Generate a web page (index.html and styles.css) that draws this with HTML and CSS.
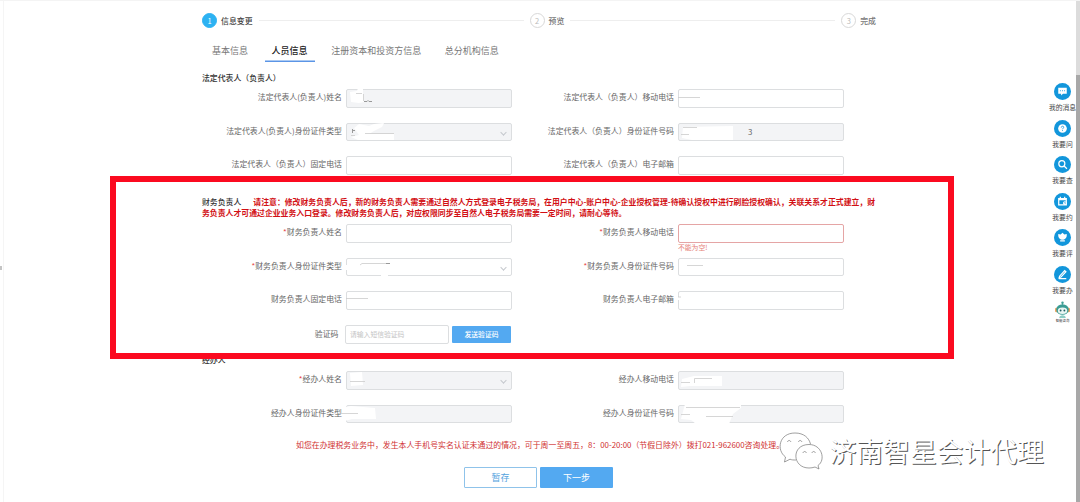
FILE: index.html
```html
<!doctype html>
<html lang="zh-CN">
<head>
  <meta charset="utf-8">
  <title>信息变更</title>
  <link rel="stylesheet" href="styles.css">
</head>
<body>
  <div class="page">
    <div class="drawer"><span class="drawer__handle"></span></div>

    <main class="main">
      <div class="steps">
        <span class="steps__num steps__num--active">1</span>
        <span class="steps__text steps__text--active">信息变更</span>
        <span class="steps__line"></span>
        <span class="steps__num">2</span>
        <span class="steps__text">预览</span>
        <span class="steps__line"></span>
        <span class="steps__num">3</span>
        <span class="steps__text">完成</span>
      </div>

      <nav class="tabs">
        <a class="tabs__item">基本信息</a>
        <a class="tabs__item tabs__item--active">人员信息</a>
        <a class="tabs__item">注册资本和投资方信息</a>
        <a class="tabs__item">总分机构信息</a>
      </nav>

      <!-- 法定代表人 -->
      <section class="section section--legal">
        <h3 class="section__title">法定代表人（负责人）</h3>
        <div class="form">
          <div class="field">
            <label class="field__label">法定代表人(负责人)姓名</label>
            <div class="field__input field__input--disabled">
              <svg class="mask" viewBox="0 0 166 19">
                <path class="mask__fill" d="M4 3l7-1 1-3h5v4l1 10-5 1-8-1z"/>
                <path class="mask__line" d="M10 4.500h6M17.500 5v7"/>
                <path class="mask__ink" d="M18 12.500h3l1-1 1 1h3"/>
              </svg>
            </div>
          </div>
          <div class="field">
            <label class="field__label">法定代表人（负责人）移动电话</label>
            <div class="field__input">
              <svg class="mask" viewBox="0 0 166 19"><path class="mask__line" d="M0 8.500h22"/></svg>
            </div>
          </div>
          <div class="field">
            <label class="field__label">法定代表人(负责人)身份证件类型</label>
            <div class="field__input field__input--disabled field__input--select">
              <svg class="mask" viewBox="0 0 166 19">
                <path class="mask__fill" d="M8 5l5-4 10 2 5-2 10-1-2 4-8 4-5 3h25v6H12l-7-3 8-2z"/>
                <path class="mask__line" d="M19 10.500h29M5 12.500h4"/>
                <path class="mask__ink" d="M6.500 6v4M6 7.500h3"/>
              </svg>
            </div>
          </div>
          <div class="field">
            <label class="field__label">法定代表人（负责人）身份证件号码</label>
            <div class="field__input field__input--disabled">
              <svg class="mask" viewBox="0 0 166 19">
                <path class="mask__fill" d="M5 4l50-1v14H14l-10-2z"/>
                <path class="mask__line" d="M5 4.500h14M3 11.500h8"/>
              </svg>
              <span class="field__rest">3</span>
            </div>
          </div>
          <div class="field">
            <label class="field__label">法定代表人（负责人）固定电话</label>
            <div class="field__input"></div>
          </div>
          <div class="field">
            <label class="field__label">法定代表人（负责人）电子邮箱</label>
            <div class="field__input"></div>
          </div>
        </div>
      </section>

      <!-- 财务负责人 -->
      <section class="section section--finance">
        <h3 class="section__title">财务负责人<span class="section__notice">请注意：修改财务负责人后，新的财务负责人需要通过自然人方式登录电子税务局，在用户中心-账户中心-企业授权管理-待确认授权中进行刷脸授权确认，关联关系才正式建立，财</span><br><span class="section__notice section__notice--next">务负责人才可通过企业业务入口登录。修改财务负责人后，对应权限同步至自然人电子税务局需要一定时间，请耐心等待。</span></h3>
        <div class="form">
          <div class="field">
            <label class="field__label"><i class="req">*</i>财务负责人姓名</label>
            <div class="field__input"></div>
          </div>
          <div class="field">
            <label class="field__label"><i class="req">*</i>财务负责人移动电话</label>
            <div class="field__input field__input--error">
              <span class="field__error">不能为空!</span>
            </div>
          </div>
          <div class="field">
            <label class="field__label"><i class="req">*</i>财务负责人身份证件类型</label>
            <div class="field__input field__input--select">
              <svg class="mask" viewBox="0 0 166 19">
                <path class="mask__fill" d="M-1 7h4v5h-4zM35 16h7v3h-7z"/>
                <path class="mask__line" d="M14 7l2-1.500h25"/>
                <path class="mask__ink" d="M40 5.500h4"/>
              </svg>
            </div>
          </div>
          <div class="field">
            <label class="field__label"><i class="req">*</i>财务负责人身份证件号码</label>
            <div class="field__input">
              <svg class="mask" viewBox="0 0 166 19"><path class="mask__line" d="M9 7.500h16"/></svg>
            </div>
          </div>
          <div class="field">
            <label class="field__label">财务负责人固定电话</label>
            <div class="field__input">
              <svg class="mask" viewBox="0 0 166 19"><path class="mask__line" d="M0 7.500h22"/></svg>
            </div>
          </div>
          <div class="field">
            <label class="field__label">财务负责人电子邮箱</label>
            <div class="field__input">
              <svg class="mask" viewBox="0 0 166 19">
                <path class="mask__fill" d="M-1 6h3v3h-3z"/>
                <path class="mask__line" d="M0 6h3"/>
              </svg>
            </div>
          </div>
          <div class="field field--code">
            <label class="field__label">验证码</label>
            <div class="field__input field__input--code">请输入短信验证码</div>
            <button class="btn btn--send">发送验证码</button>
          </div>
        </div>
      </section>

      <!-- 经办人 -->
      <section class="section section--agent">
        <h3 class="section__title">经办人</h3>
        <div class="form">
          <div class="field">
            <label class="field__label"><i class="req">*</i>经办人姓名</label>
            <div class="field__input field__input--disabled field__input--select">
              <svg class="mask" viewBox="0 0 166 19">
                <path class="mask__fill" d="M4 2l12-1 1 13-12 1z"/>
                <path class="mask__line" d="M4 10.500h15"/>
              </svg>
            </div>
          </div>
          <div class="field">
            <label class="field__label">经办人移动电话</label>
            <div class="field__input field__input--disabled">
              <svg class="mask" viewBox="0 0 166 19">
                <path class="mask__fill" d="M4 8l12-3h28v10H12l-9 1z"/>
                <path class="mask__line" d="M3 11.500h9M16.500 12V7.500H34"/>
              </svg>
            </div>
          </div>
          <div class="field">
            <label class="field__label">经办人身份证件类型</label>
            <div class="field__input field__input--disabled">
              <svg class="mask" viewBox="0 0 166 19">
                <path class="mask__fill" d="M-1 2l6-1 24 2 1 11H6l-7 2z"/>
                <path class="mask__line" d="M-5 8.500h17"/>
              </svg>
            </div>
          </div>
          <div class="field">
            <label class="field__label">经办人身份证件号码</label>
            <div class="field__input field__input--disabled">
              <svg class="mask" viewBox="0 0 166 19">
                <path class="mask__fill" d="M7-1h56v4l-8 6-4 10H18l-5-4-10-1z"/>
                <path class="mask__line" d="M8 2.500h54M3 9.500h9M28 11.500h27"/>
              </svg>
            </div>
          </div>
        </div>
      </section>

      <p class="tip">如您在办理税务业务中，发生本人手机号实名认证未通过的情况，可于周一至周五，8：00-20:00（节假日除外）拨打021-962600咨询处理。</p>

      <div class="actions">
        <button class="btn btn--plain">暂存</button>
        <button class="btn btn--primary">下一步</button>
      </div>
    </main>

    <aside class="side">
      <a class="side__item">
        <svg class="side__icon" viewBox="0 0 18 18"><circle cx="9" cy="9" r="9"/><path class="w" d="M4.500 5h9v6.500H9.500L7.500 13.300v-1.800h-3z"/><path class="d" d="M6.300 8.200h1M8.500 8.200h1M10.700 8.200h1"/></svg>
        <span class="side__text">我的消息</span>
      </a>
      <a class="side__item">
        <svg class="side__icon" viewBox="0 0 18 18"><circle cx="9" cy="9" r="9"/><circle class="w" cx="9" cy="9" r="4.600"/><path class="d" d="M7.700 8c0-1.900 2.700-1.800 2.600-.2 0 .8-1.300.9-1.300 2M9 10.800v.9"/></svg>
        <span class="side__text">我要问</span>
      </a>
      <a class="side__item">
        <svg class="side__icon" viewBox="0 0 18 18"><circle cx="9" cy="9" r="9"/><circle class="s" cx="8.300" cy="8.200" r="3.200"/><path class="s" d="M10.700 10.600l3 2.900"/></svg>
        <span class="side__text">我要查</span>
      </a>
      <a class="side__item">
        <svg class="side__icon" viewBox="0 0 18 18"><circle cx="9" cy="9" r="9"/><path class="s" d="M5 6h8v6.500H5zM5 7h8M6.700 4v2M11.300 4v2"/><circle class="w" cx="11.500" cy="10.700" r="2"/><path class="d" d="M11.500 9.800v1h.8"/></svg>
        <span class="side__text">我要约</span>
      </a>
      <a class="side__item">
        <svg class="side__icon" viewBox="0 0 18 18"><circle cx="9" cy="9" r="9"/><path class="w" d="M9 4l2 1.700 2.500-.5c.4 3.300-1 5.500-3.500 6.200H8C5.500 10.700 4.100 8.500 4.500 5.200l2.500.5zM6.500 12h5v1.200h-5z"/></svg>
        <span class="side__text">我要评</span>
      </a>
      <a class="side__item">
        <svg class="side__icon" viewBox="0 0 18 18"><circle cx="9" cy="9" r="9"/><path class="s" d="M6 10.700l5.300-5.800 1.300 1.200-5.200 5.600-1.900.5zM5 13.400h8"/></svg>
        <span class="side__text">我要办</span>
      </a>
      <a class="side__item side__item--robot">
        <svg class="side__robot" viewBox="0 0 16 18">
          <path d="M8 4V1.500" stroke="#53a79d"/><circle cx="8" cy="1.700" r="1.300" fill="#3f9f95"/>
          <rect x="0" y="7" width="3" height="5" rx="1.500" fill="#f0a35f"/><rect x="13" y="7" width="3" height="5" rx="1.500" fill="#f0a35f"/>
          <ellipse cx="8" cy="9" rx="6.700" ry="5.700" fill="#3b9c94"/>
          <ellipse cx="8" cy="10.300" rx="5" ry="3.500" fill="#e9f6f3"/>
          <circle cx="6" cy="10" r="1" fill="#235e64"/><circle cx="10" cy="10" r="1" fill="#235e64"/>
          <path d="M4.500 18c0-4 7-4 7 0z" fill="#8ecdc5"/>
        </svg>
        <span class="side__tiny">智能咨询</span>
      </a>
    </aside>

    <div class="scrollbar"><div class="scrollbar__thumb"></div></div>

    <div class="highlight"></div>

    <div class="watermark">
      <svg class="watermark__logo" viewBox="0 0 44 38">
        <path d="M17 28c-3 0-4 0-6-.8L5.500 30l1-5C-3 18 0 1 16 1c9 0 14 5 15.500 11"/>
        <path d="M30 12.500c-18 0-17 23.500 0 23.500 2 0 4-.3 6-1l4 2-1-3.500C47 28 43 12.500 30 12.500z"/>
        <path d="M8.500 10c.3-2 3-2 3.300 0M19.500 10c.3-2 3-2 3.300 0M24 21c.3-2 3-2 3.300 0M33 21c.3-2 3-2 3.300 0"/>
      </svg>
      <span class="watermark__text">济南智星会计代理</span>
    </div>
  </div>
</body>
</html>
```

FILE: styles.css
```css
* {
  box-sizing: border-box;
}

body {
  margin: 0;
  background: #fff;
  color: #666;
  font-family: "Noto Sans CJK SC", sans-serif;
  font-size: 7.9px;
}

.page {
  position: relative;
  display: flex;
  height: 502px;
  overflow: hidden;
  border-top: 1px solid #f4f4f4;
}

.drawer {
  display: flex;
  align-items: center;
  width: 4px;
  padding-top: 32px;
  border-right: 1px solid #f5f5f5;
}

.drawer__handle {
  width: 2px;
  height: 4px;
  background: #c4c4c4;
}

.main {
  flex: 1;
  padding: 12px 0 0 198px;
}

/* steps */
.steps {
  display: flex;
  align-items: center;
  width: 674px;
  height: 15px;
}

.steps__num {
  width: 15px;
  height: 15px;
  border: 1px solid #d8d8d8;
  border-radius: 50%;
  color: #bbb;
  font-size: 7.5px;
  line-height: 13px;
  text-align: center;
}

.steps__num--active {
  border-color: #2db2f2;
  background: #2db2f2;
  color: #fff;
}

.steps__text {
  margin-left: 4px;
  color: #777;
  font-weight: 500;
}

.steps__text--active {
  color: #444;
}

.steps__line {
  flex: 1;
  height: 1px;
  margin: 0 6px;
  background: #eee;
}

/* tabs */
.tabs {
  display: flex;
  gap: 9.6px;
  height: 23px;
  margin: 11px 0 0 3px;
}

.tabs__item {
  height: 23px;
  padding: 0 7px;
  color: #777;
  font-size: 9px;
  line-height: 23px;
}

.tabs__item--active {
  color: #222;
  font-weight: 500;
  box-shadow: inset 0 -1.5px #5b95e6;
}

/* sections */
.section__title {
  margin: 0;
  color: #333;
  font-size: 7.87px;
  font-weight: 500;
  line-height: 11.4px;
  white-space: nowrap;
}

.section--legal {
  height: 124px;
  padding-top: 10px;
}

.section--legal .form {
  margin-top: 5.600px;
}

.section--finance {
  height: 168px;
  padding-top: 10px;
}

.section--finance .form {
  margin-top: 5.200px;
}

.section--agent .form {
  margin-top: 5.600px;
}

.section__notice {
  margin-left: 12px;
  color: #d20f14;
  font-weight: 700;
}

.section__notice--next {
  margin-left: 0;
}

.form {
  display: grid;
  grid-template-columns: 332px 332px;
  grid-auto-rows: 18.500px;
  row-gap: 15.200px;
}

.field {
  display: flex;
}

.field__label {
  width: 140px;
  margin-right: 4px;
  line-height: 16px;
  text-align: right;
  white-space: nowrap;
}

.req {
  color: #e64545;
  font-style: normal;
}

.field__input {
  position: relative;
  width: 166px;
  border: 1px solid #dcdee0;
  border-radius: 2px;
  background: #fff;
}

.field__input--disabled {
  background: #f3f4f6;
}

.field__input--error {
  border-color: #e5a5a5;
}

.field__input--select::after {
  content: "";
  position: absolute;
  top: 6px;
  right: 5px;
  width: 4px;
  height: 4px;
  border: solid #c4c7cc;
  border-width: 0 1px 1px 0;
  transform: rotate(45deg) scale(.9);
}

.field__error {
  position: absolute;
  top: 16.500px;
  left: -1px;
  color: #e58078;
  font-size: 6.800px;
  line-height: 11px;
  white-space: nowrap;
}

.field__rest {
  position: absolute;
  top: 0;
  left: 69px;
  line-height: 16px;
}

.field--code .field__label {
  width: 136.5px;
  margin-right: 6.5px;
  line-height: 17px;
}

.field--code .field__input {
  width: 104px;
  padding-left: 4px;
  color: #c4c4c4;
  font-size: 6.800px;
  line-height: 16px;
}

/* wiped values */
.mask {
  position: absolute;
  top: -1px;
  left: -1px;
  width: 166px;
  height: 19px;
  overflow: visible;
}

.mask__fill {
  fill: #fff;
}

.mask__line {
  fill: none;
  stroke: #ccc;
  stroke-width: .8;
}

.mask__ink {
  fill: none;
  stroke: #999;
  stroke-width: 1;
}

/* buttons */
.btn {
  padding: 0;
  border: 0;
  border-radius: 1px;
  background: #53a9f1;
  color: #fff;
  font-family: inherit;
}

.btn--send {
  width: 59px;
  height: 17px;
  margin: 1px 0 0 3px;
  font-size: 6.800px;
  font-weight: 500;
  line-height: 17px;
}

.tip {
  width: 674px;
  margin: 15.500px 0 0;
  padding-left: 94px;
  color: #d03030;
  line-height: 11px;
  white-space: nowrap;
}

.actions {
  display: flex;
  gap: 3px;
  margin: 17.500px 0 0 262px;
}

.actions .btn {
  width: 73px;
  height: 21px;
  font-size: 9px;
}

.actions .btn--plain {
  border: 1px solid #8fc3ea;
  background: #fff;
  color: #53a3de;
}

/* side tools */
.side {
  display: flex;
  flex-direction: column;
  width: 27px;
  padding-top: 82px;
}

.side__item {
  display: flex;
  flex-direction: column;
  align-items: center;
  height: 36.5px;
  color: #444;
}

.side__item--robot {
  margin-top: -1px;
}

.side__icon {
  flex: none;
  width: 17px;
  height: 17px;
  fill: #1296db;
}

.side__icon .w {
  fill: #fff;
}

.side__icon .s {
  fill: none;
  stroke: #fff;
  stroke-width: 1.3;
}

.side__icon .d {
  fill: none;
  stroke: #1296db;
  stroke-width: .9;
}

.side__text {
  margin-top: 2px;
  font-size: 6.800px;
  line-height: 11px;
  white-space: nowrap;
}

.side__robot {
  width: 15px;
  height: 17px;
}

.side__tiny {
  font-size: 3.400px;
  line-height: 5px;
}

.scrollbar {
  width: 4px;
  padding-top: 74px;
  background: #dcdcdc;
}

.scrollbar__thumb {
  height: 427px;
  background: #a8a8a8;
}

/* red frame over the finance section */
.highlight {
  position: absolute;
  top: 175px;
  left: 110px;
  width: 844px;
  height: 183px;
  border: 6px solid #fb0a20;
}

.watermark {
  position: absolute;
  top: 431px;
  left: 779px;
  display: flex;
  align-items: flex-start;
}

.watermark__logo {
  width: 44px;
  height: 38px;
  fill: #fff;
  stroke: #777;
  stroke-width: .7;
}

.watermark__text {
  margin: 1px 0 0 6.5px;
  color: #fff;
  font-size: 26.800px;
  line-height: 36px;
  text-shadow: 1px 1px 0 #555;
  white-space: nowrap;
}
```
